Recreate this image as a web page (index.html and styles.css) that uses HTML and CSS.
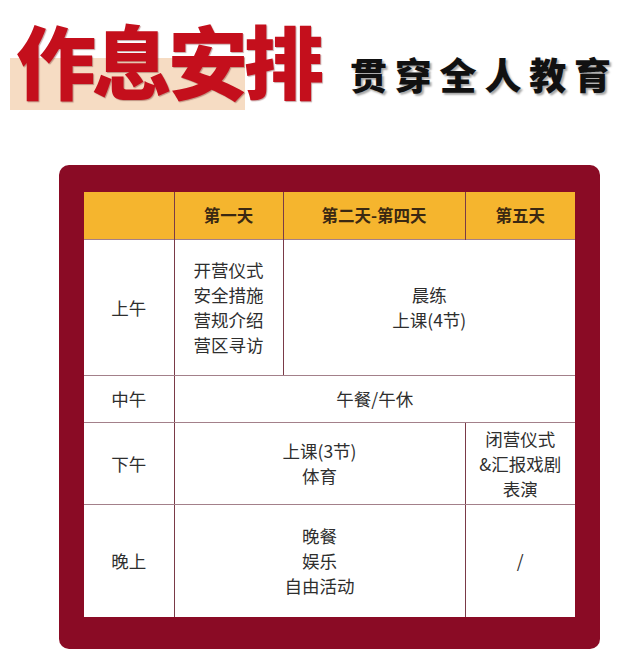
FILE: index.html
```html
<!DOCTYPE html>
<html lang="zh-CN">
<head>
<meta charset="utf-8">
<link rel="stylesheet" href="styles.css">
</head>
<body>
<header class="hero">
  <h1 class="title">作息安排</h1>
  <p class="subtitle">贯穿全人教育</p>
</header>
<section class="card">
  <table class="schedule">
    <colgroup>
      <col class="c0"><col class="c1"><col class="c2"><col class="c3">
    </colgroup>
    <thead>
      <tr class="r-head">
        <th></th><th>第一天</th><th>第二天-第四天</th><th>第五天</th>
      </tr>
    </thead>
    <tbody>
      <tr class="r-am">
        <td>上午</td>
        <td>开营仪式<br>安全措施<br>营规介绍<br>营区寻访</td>
        <td colspan="2">晨练<br>上课(4节)</td>
      </tr>
      <tr class="r-noon">
        <td>中午</td>
        <td colspan="3">午餐/午休</td>
      </tr>
      <tr class="r-pm">
        <td>下午</td>
        <td colspan="2">上课(3节)<br>体育</td>
        <td>闭营仪式<br>&amp;汇报戏剧<br>表演</td>
      </tr>
      <tr class="r-eve">
        <td>晚上</td>
        <td colspan="2">晚餐<br>娱乐<br>自由活动</td>
        <td>/</td>
      </tr>
    </tbody>
  </table>
</section>
</body>
</html>
```

FILE: styles.css
```css
html, body {
  margin: 0;
  padding: 0;
  background: #ffffff;
}
body {
  width: 634px;
  height: 664px;
  overflow: hidden;
  font-family: "Noto Sans CJK SC", "Noto Sans", sans-serif;
}
.hero {
  display: flex;
  align-items: flex-end;
  box-sizing: border-box;
  height: 165px;
  padding-bottom: 55px;
}
.title {
  margin: 0 0 0 10px;
  padding: 0 0 0 6px;
  height: 92px;
  font-size: 80px;
  line-height: 80px;
  font-weight: 900;
  color: #c40f1c;
  letter-spacing: -4px;
  background-image: linear-gradient(#f6dcc3, #f6dcc3);
  background-size: 235px 52px;
  background-position: 0 100%;
  background-repeat: no-repeat;
  text-shadow: 1px 1px 1px rgba(90, 0, 0, 0.35);
}
.subtitle {
  margin: 0 0 14px 30px;
  font-size: 37px;
  line-height: 44px;
  font-weight: 900;
  color: #111;
  letter-spacing: 7.8px;
  text-shadow: 2px 2px 2px rgba(0, 0, 0, 0.35);
}
.card {
  margin-left: 59px;
  width: 541px;
  height: 484px;
  box-sizing: border-box;
  padding: 27px 25px 32px 25px;
  background: #8a0b25;
  border-radius: 10px;
}
.schedule {
  width: 491px;
  table-layout: fixed;
  border-collapse: collapse;
  background: #ffffff;
}
.c0 { width: 90px; }
.c1 { width: 109px; }
.c2 { width: 182px; }
.c3 { width: 110px; }
.schedule th,
.schedule td {
  padding: 0;
  text-align: center;
  vertical-align: middle;
  border-left: 1px solid #7a3a47;
  border-right: 1px solid #7a3a47;
  border-top: 1.5px solid #a3808a;
  border-bottom: 1.5px solid #a3808a;
  font-size: 17.5px;
  line-height: 25px;
  color: #2e2e2e;
  font-weight: 400;
}
.schedule tr > :first-child { border-left: none; }
.schedule tr > :last-child { border-right: none; }
.schedule thead th {
  background: #f5b52e;
  border-top: none;
  border-bottom: none;
  font-weight: 700;
  font-size: 16.5px;
  color: #3a2812;
}
.schedule tbody tr:last-child td { border-bottom: none; }
.r-head { height: 47px; }
.r-am { height: 136px; }
.r-noon { height: 47px; }
.r-pm { height: 82px; }
.r-eve { height: 113px; }
```
